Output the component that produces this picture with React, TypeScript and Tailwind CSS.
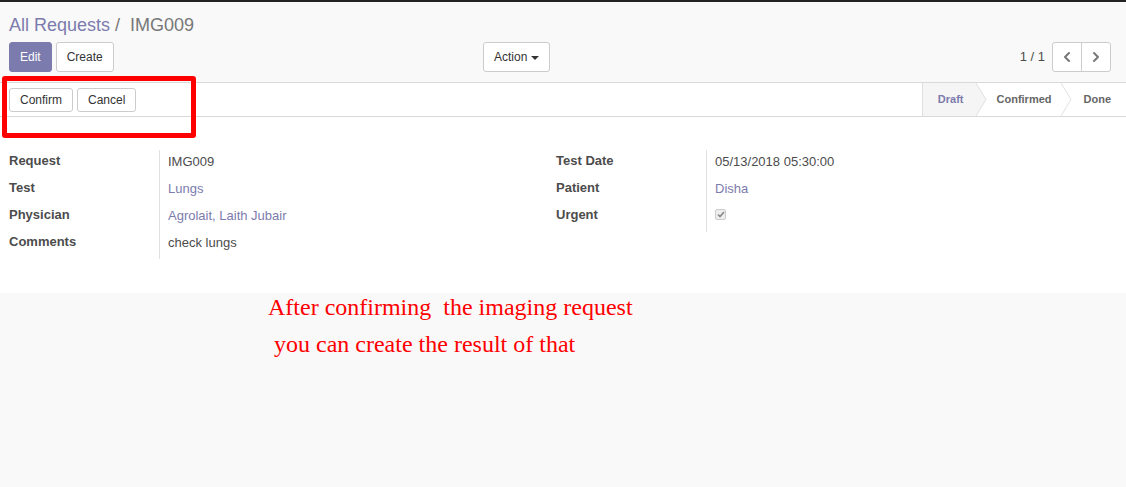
import { ChevronLeft, ChevronRight } from "lucide-react";

const leftRows = [
  { label: "Request", value: "IMG009", link: false },
  { label: "Test", value: "Lungs", link: true },
  { label: "Physician", value: "Agrolait, Laith Jubair", link: true },
  { label: "Comments", value: "check lungs", link: false },
];

const rightRows = [
  { label: "Test Date", value: "05/13/2018 05:30:00", link: false },
  { label: "Patient", value: "Disha", link: true },
];

function FieldGroup({
  rows,
  labelWidth,
  lineHeight,
  extra,
}: {
  rows: { label: string; value: string; link: boolean }[];
  labelWidth: string;
  lineHeight: string;
  extra?: React.ReactNode;
}) {
  return (
    <div className="flex items-start">
      <div className={`flex flex-col ${labelWidth}`}>
        {rows.map((row) => (
          <div key={row.label} className="h-[27px] text-[13px] font-bold text-[#4c4c4c]">
            {row.label}
          </div>
        ))}
        {extra ? <div className="h-[27px] text-[13px] font-bold text-[#4c4c4c]">Urgent</div> : null}
      </div>
      <div className={`-mt-[1px] flex flex-col border-l border-[#e0e0e0] pl-[8px] pt-[2px] ${lineHeight}`}>
        {rows.map((row) => (
          <div
            key={row.label}
            className={`h-[27px] shrink-0 text-[13px] ${row.link ? "text-[#7c7bad]" : "text-[#4c4c4c]"}`}
          >
            {row.value}
          </div>
        ))}
        {extra}
      </div>
    </div>
  );
}

export default function App() {
  return (
    <div className="relative min-h-[487px] bg-[#f9f9f9] font-['Liberation_Sans',Arial,sans-serif] text-[#4c4c4c]">
      <div className="h-[2px] bg-[#222]" />

      {/* control panel */}
      <div className="border-b border-[#d9d9d9] px-[9px] pt-[11px] pb-[10px]">
        <div className="text-[18px] leading-[24px]">
          <span className="text-[#7c7bad]">All Requests</span>
          <span className="text-[#777]"> / </span>
          <span className="text-[#777]">&nbsp;IMG009</span>
        </div>
        <div className="mt-[5px] flex items-center">
          <div className="flex w-[474px] gap-[4px]">
            <button className="h-[30px] rounded-[3px] border border-[#7c7bad] bg-[#7c7bad] px-[10px] text-[12px] text-white">
              Edit
            </button>
            <button className="h-[30px] rounded-[3px] border border-[#ccc] bg-white px-[10px] text-[12px] text-[#333]">
              Create
            </button>
          </div>
          <button className="flex h-[30px] items-center gap-[4px] rounded-[3px] border border-[#ccc] bg-white px-[10px] text-[12px] text-[#333]">
            Action
            <span className="mt-[1px] h-0 w-0 border-x-[4px] border-t-[4px] border-x-transparent border-t-[#333]" />
          </button>
          <div className="ml-auto flex items-center">
            <span className="mr-[7px] text-[13px] text-[#4c4c4c]">1 / 1</span>
            <div className="flex h-[30px] rounded-[3px] border border-[#ccc] bg-white">
              <div className="flex w-[29px] items-center justify-center border-r border-[#ccc]">
                <ChevronLeft size={16} strokeWidth={3} className="text-[#777]" />
              </div>
              <div className="flex w-[28px] items-center justify-center">
                <ChevronRight size={16} strokeWidth={3} className="text-[#777]" />
              </div>
            </div>
          </div>
          <div className="w-[6px]" />
        </div>
      </div>

      {/* sheet */}
      <div className="bg-white">
        <div className="flex h-[34px] items-center border-b border-[#d9d9d9] pl-[9px]">
          <div className="flex gap-[4px]">
            <button className="h-[24px] rounded-[3px] border border-[#ccc] bg-white px-[10px] text-[12px] text-[#333]">
              Confirm
            </button>
            <button className="h-[24px] rounded-[3px] border border-[#ccc] bg-white px-[10px] text-[12px] text-[#333]">
              Cancel
            </button>
          </div>
          <div className="ml-auto flex h-full text-[11px] font-bold">
            <div className="relative flex items-center border-l border-[#e0e0e0] bg-[#f5f5f5] pl-[15px] pr-[13px] text-[#7c7bad]">
              Draft
              <svg className="absolute -right-[10px] top-0 z-10" width="11" height="33" viewBox="0 0 11 33">
                <path d="M0 0 L10 16.5 L0 33 Z" fill="#f5f5f5" />
                <path d="M0 0 L10 16.5 L0 33" fill="none" stroke="#e0e0e0" strokeWidth="1" />
              </svg>
            </div>
            <div className="relative flex items-center pl-[20px] pr-[10px] text-[#666]">
              Confirmed
              <svg className="absolute -right-[10px] top-0 z-10" width="11" height="33" viewBox="0 0 11 33">
                <path d="M0 0 L10 16.5 L0 33 Z" fill="#fff" />
                <path d="M0 0 L10 16.5 L0 33" fill="none" stroke="#e0e0e0" strokeWidth="1" />
              </svg>
            </div>
            <div className="flex items-center pl-[22px] pr-[15px] text-[#666]">Done</div>
          </div>
        </div>

        <div className="flex h-[176px] items-start px-[9px] pt-[34px]">
          <div className="w-[547px]">
            <FieldGroup rows={leftRows} labelWidth="w-[150px]" lineHeight="h-[109px]" />
          </div>
          <FieldGroup
            rows={rightRows}
            labelWidth="w-[150px]"
            lineHeight="h-[82px]"
            extra={
              <div className="h-[27px] pt-[3px]">
                <div className="flex h-[11px] w-[11px] items-center justify-center rounded-[2px] border border-[#ccc] bg-[#eee]">
                  <svg width="8" height="7" viewBox="0 0 8 7">
                    <path d="M1 3.5 L3 5.5 L7 1" fill="none" stroke="#888" strokeWidth="1.6" />
                  </svg>
                </div>
              </div>
            }
          />
        </div>
      </div>

      {/* annotation */}
      <div className="font-['Liberation_Serif',serif] text-[24px] leading-[37px] text-[#ff0000]">
        <div className="-mt-[4px] pl-[268px]">After confirming&nbsp; the imaging request</div>
        <div className="pl-[274px]">you can create the result of that</div>
      </div>

      <div className="pointer-events-none absolute left-[2px] top-[76px] h-[62px] w-[194px] rounded-[3px] border-[5px] border-[#ff0000]" />
    </div>
  );
}
